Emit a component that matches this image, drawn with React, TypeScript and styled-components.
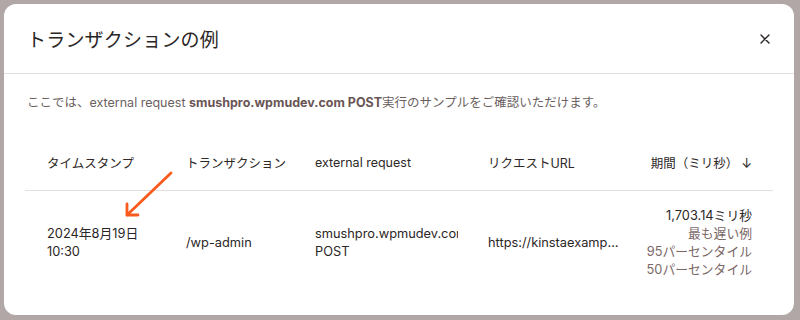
import React from "react";
import styled, { createGlobalStyle } from "styled-components";

const GlobalStyle = createGlobalStyle`
  html, body {
    margin: 0;
    padding: 0;
    background: #b1a7a6;
  }
  body {
    font-family: "Inter", "Noto Sans CJK JP", sans-serif;
    -webkit-font-smoothing: antialiased;
  }
`;

const Backdrop = styled.div`
  width: 800px;
  height: 320px;
  box-sizing: border-box;
  padding: 4px 6px 5px 4px;
  background: #b1a7a6;
  overflow: hidden;
`;

const Modal = styled.div`
  position: relative;
  width: 790px;
  height: 311px;
  background: #fff;
  border-radius: 12px;
  display: flex;
  flex-direction: column;
  overflow: hidden;
`;

const Header = styled.div`
  height: 69px;
  display: flex;
  align-items: center;
  justify-content: space-between;
  padding: 0 17px 0 23px;
  border-bottom: 1px solid #e4dfdc;
`;

const Title = styled.h2`
  margin: 0;
  font-size: 19px;
  font-weight: 400;
  color: #2b2626;
  letter-spacing: 0.2px;
`;

const CloseButton = styled.button`
  width: 24px;
  height: 24px;
  border: 0;
  background: none;
  padding: 0;
  display: flex;
  align-items: center;
  justify-content: center;
  cursor: pointer;
`;

const Body = styled.div`
  padding: 20px 21px 0 21px;
  display: flex;
  flex-direction: column;
`;

const Description = styled.p`
  margin: 0 0 0 2px;
  font-size: 12.5px;
  line-height: 18px;
  color: #6b5f5f;

  & > b {
    color: #6a5555;
    font-weight: 700;
  }
`;

const Table = styled.div`
  margin-top: 23px;
  display: grid;
  grid-template-columns: 139px 129px 173px 162px 1fr;
`;

const HeadCell = styled.div<{ $right?: boolean }>`
  height: 56px;
  box-sizing: border-box;
  display: flex;
  align-items: center;
  justify-content: ${(p) => (p.$right ? "flex-end" : "flex-start")};
  padding: ${(p) => (p.$right ? "0 21px 0 0" : "0 8px 0 22px")};
  font-size: 12.5px;
  color: #2e2828;
  border-bottom: 1px solid #e4dfdc;
  white-space: nowrap;
`;

const SortArrow = styled.span`
  margin-left: 3px;
  font-size: 13px;
`;

const Cell = styled.div<{ $right?: boolean }>`
  box-sizing: border-box;
  height: 104px;
  padding: ${(p) => (p.$right ? "0 21px 0 0" : "0 8px 0 22px")};
  display: flex;
  flex-direction: column;
  justify-content: center;
  align-items: ${(p) => (p.$right ? "flex-end" : "flex-start")};
  font-size: 12.8px;
  line-height: 18px;
  color: #2b2626;
  overflow: hidden;
  min-width: 0;
`;

const Clip = styled.span`
  display: block;
  max-width: 100%;
  white-space: nowrap;
  overflow: hidden;
`;

const Ellipsis = styled(Clip)`
  text-overflow: ellipsis;
`;

const Muted = styled.span`
  color: #7a6868;
`;

const Annotation = styled.svg`
  position: absolute;
  left: 113px;
  top: 163px;
  pointer-events: none;
`;

export default function App() {
  return (
    <>
      <GlobalStyle />
      <Backdrop>
        <Modal>
          <Header>
            <Title>トランザクションの例</Title>
            <CloseButton aria-label="close">
              <svg width="10" height="10" viewBox="0 0 10 10">
                <path
                  d="M1 1L9 9M9 1L1 9"
                  stroke="#2b2626"
                  strokeWidth="1.4"
                  strokeLinecap="round"
                />
              </svg>
            </CloseButton>
          </Header>
          <Body>
            <Description>
              ここでは、external request <b>smushpro.wpmudev.com POST</b>
              実行のサンプルをご確認いただけます。
            </Description>
            <Table>
              <HeadCell>タイムスタンプ</HeadCell>
              <HeadCell>トランザクション</HeadCell>
              <HeadCell>external request</HeadCell>
              <HeadCell>リクエストURL</HeadCell>
              <HeadCell $right>
                期間（ミリ秒）<SortArrow>↓</SortArrow>
              </HeadCell>

              <Cell>
                <span>2024年8月19日</span>
                <span>10:30</span>
              </Cell>
              <Cell>/wp-admin</Cell>
              <Cell>
                <Clip>smushpro.wpmudev.com</Clip>
                <span>POST</span>
              </Cell>
              <Cell>
                <Ellipsis>https://kinstaexample.com/wp-admin</Ellipsis>
              </Cell>
              <Cell $right>
                <span>1,703.14ミリ秒</span>
                <Muted>最も遅い例</Muted>
                <Muted>95パーセンタイル</Muted>
                <Muted>50パーセンタイル</Muted>
              </Cell>
            </Table>
          </Body>
          <Annotation width="60" height="58" viewBox="0 0 60 58">
            <g
              stroke="#fa5a1e"
              strokeWidth="2.8"
              strokeLinecap="round"
              strokeLinejoin="round"
              fill="none"
            >
              <path d="M54 6L10 48" />
              <path d="M10 37L10 48L21 48" />
            </g>
          </Annotation>
        </Modal>
      </Backdrop>
    </>
  );
}
